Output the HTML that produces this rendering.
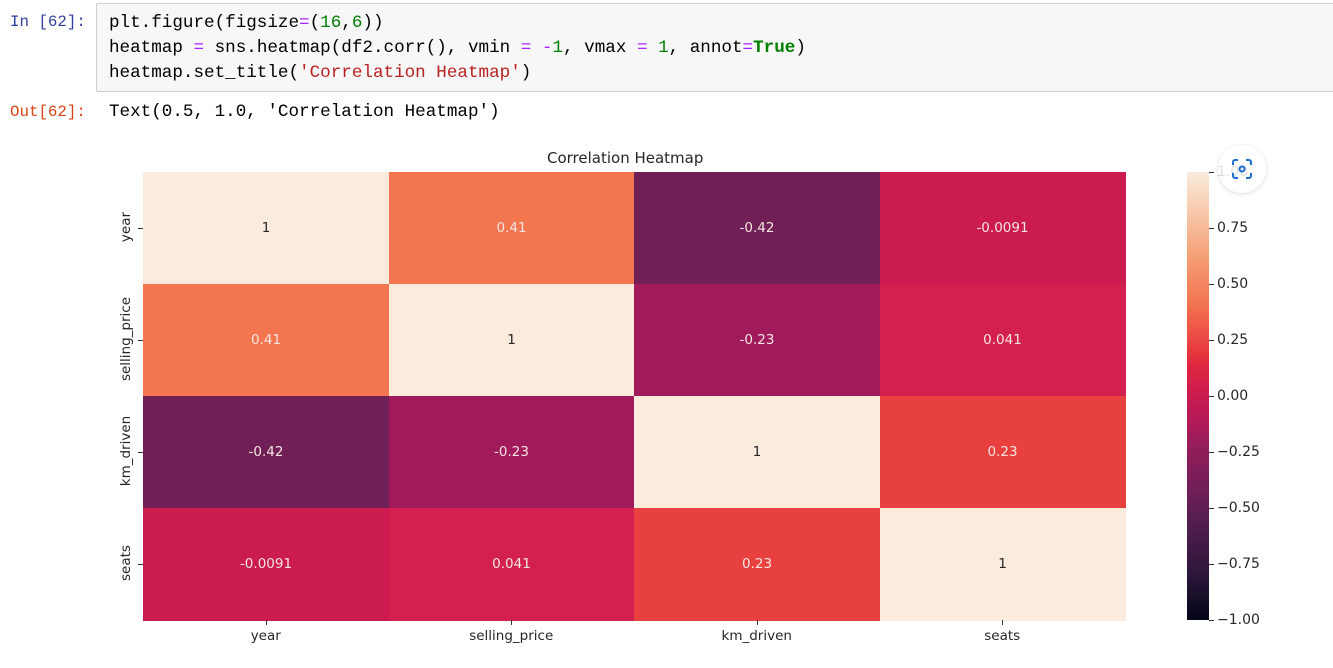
<!DOCTYPE html><html><head><style>
body{margin:0;width:1333px;height:668px;background:#fff;overflow:hidden;position:relative;font-family:"DejaVu Sans","Liberation Sans",sans-serif}
.m{font-family:"Liberation Mono",monospace;font-size:17.6px;position:absolute;white-space:pre}
.p{font-size:15.8px}
.box{position:absolute;left:96px;top:3px;width:1240px;height:87px;background:#f7f7f7;border:1px solid #cfcfcf;border-radius:2px}
.c{position:absolute;display:flex;align-items:center;justify-content:center;font-size:13.5px}
.t{position:absolute;font-size:13.5px;color:#262626}
</style></head><body>
<div class="m p" style="left:10px;top:13px;color:#303f9f">In [62]:</div>
<div class="box"></div>
<div class="m" style="left:109px;top:11px;line-height:25px;color:#000">plt.figure(figsize<span style="color:#aa22ff">=</span>(<span style="color:#008000">16</span>,<span style="color:#008000">6</span>))
heatmap <span style="color:#aa22ff">=</span> sns.heatmap(df2.corr(), vmin <span style="color:#aa22ff">=</span> <span style="color:#aa22ff">-</span><span style="color:#008000">1</span>, vmax <span style="color:#aa22ff">=</span> <span style="color:#008000">1</span>, annot<span style="color:#aa22ff">=</span><b style="color:#008000">True</b>)
heatmap.set_title(<span style="color:#ba2121">'Correlation Heatmap'</span>)</div>
<div class="m p" style="left:10px;top:103px;color:#d84315">Out[62]:</div>
<div class="m" style="left:109px;top:102px;color:#000">Text(0.5, 1.0, 'Correlation Heatmap')</div>
<div class="t" style="left:547px;top:149px;font-size:15px">Correlation Heatmap</div>
<div id="hm"></div>
<div style="position:absolute;left:1187px;top:172px;width:22px;height:448px;background:linear-gradient(to top,#03051a 0%,#2b1639 10%,#4c1d4b 20%,#701f57 29%,#921c5b 38%,#b51a58 45%,#cb1b4f 50%,#e0273f 57%,#e83f3f 61%,#f0604a 67%,#f37651 71%,#f59a72 80%,#f6b48e 86%,#f8d0b5 93%,#faebdd 100%)"></div>
<script>
const v=[[1,.41,-.42,-.0091],[.41,1,-.23,.041],[-.42,-.23,1,.23],[-.0091,.041,.23,1]];
const col={"1":"#faebdd","0.41":"#f37651","-0.42":"#701f57","-0.0091":"#cb1b4f","0.041":"#d3204f","-0.23":"#a11a5b","0.23":"#e83f3f"};
const names=["year","selling_price","km_driven","seats"];
let h="";const W=245.5,H=112;
for(let r=0;r<4;r++)for(let c=0;c<4;c++){const x=v[r][c];h+=`<div class="c" style="left:${143+c*W}px;top:${172+r*H}px;width:${W+0.5}px;height:${H+0.5}px;background:${col[String(x)]};color:${x==1?'#262626':'#f5e5e0'}">${x}</div>`;}
for(let i=0;i<4;i++){const cx=143+i*W+W/2;h+=`<div style="position:absolute;left:${cx}px;top:620px;width:1px;height:5px;background:#333"></div><div class="t" style="left:${cx-60}px;width:120px;text-align:center;top:628px">${names[i]}</div>`;
const cy=172+i*H+H/2;h+=`<div style="position:absolute;left:138px;top:${cy}px;width:5px;height:1px;background:#333"></div><div class="t" style="left:${126-60}px;top:${cy-9}px;width:120px;text-align:center;transform:rotate(-90deg)">${names[i]}</div>`;}
const tl=["1.00","0.75","0.50","0.25","0.00","\u22120.25","\u22120.50","\u22120.75","\u22121.00"];
for(let i=0;i<9;i++){const y=172+i*56;h+=`<div style="position:absolute;left:1209px;top:${y}px;width:5px;height:1px;background:#333"></div><div class="t" style="left:1217px;top:${y-8}px;font-size:14px">${tl[i]}</div>`;}
document.getElementById("hm").innerHTML=h;
</script>
<div style="position:absolute;left:1218px;top:145px;width:48px;height:48px;border-radius:50%;background:rgba(255,255,255,.85);box-shadow:0 1px 4px rgba(0,0,0,.15)"></div>
<svg style="position:absolute;left:1231px;top:158px" width="22" height="22" viewBox="0 0 22 22" fill="none" stroke="#1a6fd1" stroke-width="2"><path d="M2 7V4a2 2 0 0 1 2-2h3M15 2h3a2 2 0 0 1 2 2v3M20 15v3a2 2 0 0 1-2 2h-3M7 20H4a2 2 0 0 1-2-2v-3"/><circle cx="11" cy="11" r="2.5"/></svg>
</body></html>
